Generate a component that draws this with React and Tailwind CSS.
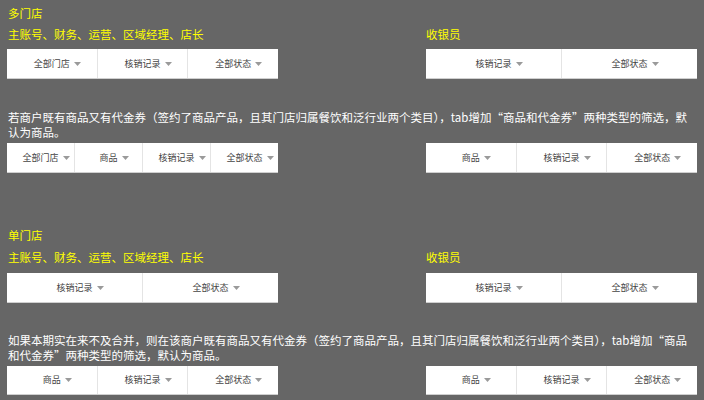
import React from "react";

const Arrow = () => (
  <svg width="7" height="4" viewBox="0 0 7 4" className="ml-[4px] shrink-0">
    <path d="M0 0 L7 0 L3.5 4 Z" fill="#9a9a9a" />
  </svg>
);

const Cell = ({ label, first }) => (
  <div
    className={
      "flex-1 flex items-center justify-center " +
      (first ? "" : "border-l border-[#e4e4e4]")
    }
  >
    <span className="w-[11px] shrink-0" />
    <span className="text-[9px] leading-[12px] text-[#444] whitespace-nowrap">{label}</span>
    <Arrow />
  </div>
);

const Bar = ({ items, h = "h-[30px]" }) => (
  <div className={"w-[271px] bg-white flex border-b border-[#cfcfcf] " + h}>
    {items.map((it, i) => (
      <Cell key={i} label={it} first={i === 0} />
    ))}
  </div>
);

const Y = "text-[#ffff00]";

export default function App() {
  return (
    <div
      className="w-[704px] h-[400px] bg-[#666666] overflow-hidden text-[11.5px]"
      style={{ fontFamily: '"Noto Sans CJK SC", "Noto Sans", sans-serif' }}
    >
      <div className="pl-[7px]">
        {/* Section 1 */}
        <div className={"pt-[3px] h-[23px] leading-[20px] pl-[1px] " + Y}>多门店</div>
        <div className="mt-[1px] flex gap-[148px] leading-[20px]">
          <div className={"w-[271px] pl-[1px] " + Y}>主账号、财务、运营、区域经理、店长</div>
          <div className={"w-[271px] " + Y}>收银员</div>
        </div>
        <div className="mt-[5px] flex gap-[148px]">
          <Bar items={["全部门店", "核销记录", "全部状态"]} />
          <Bar items={["核销记录", "全部状态"]} />
        </div>
        <div className="mt-[31px] pl-[1px] leading-[15px] text-white whitespace-nowrap">
          若商户既有商品又有代金券（签约了商品产品，且其门店归属餐饮和泛行业两个类目），tab增加“商品和代金券”两种类型的筛选，默
          <br />
          认为商品。
        </div>
        <div className="mt-[3px] flex gap-[148px]">
          <Bar items={["全部门店", "商品", "核销记录", "全部状态"]} h="h-[30px]" />
          <Bar items={["商品", "核销记录", "全部状态"]} h="h-[30px]" />
        </div>

        {/* Section 2 */}
        <div className={"mt-[52px] h-[20px] leading-[20px] pl-[1px] " + Y}>单门店</div>
        <div className="mt-[2px] flex gap-[148px] leading-[20px]">
          <div className={"w-[271px] pl-[1px] " + Y}>主账号、财务、运营、区域经理、店长</div>
          <div className={"w-[271px] " + Y}>收银员</div>
        </div>
        <div className="mt-[6px] flex gap-[148px]">
          <Bar items={["核销记录", "全部状态"]} />
          <Bar items={["核销记录", "全部状态"]} />
        </div>
        <div className="mt-[30px] pl-[1px] leading-[15px] text-white whitespace-nowrap">
          如果本期实在来不及合并，则在该商户既有商品又有代金券（签约了商品产品，且其门店归属餐饮和泛行业两个类目），tab增加“商品
          <br />
          和代金券”两种类型的筛选，默认为商品。
        </div>
        <div className="mt-[3px] flex gap-[148px]">
          <Bar items={["商品", "核销记录", "全部状态"]} h="h-[29px]" />
          <Bar items={["商品", "核销记录", "全部状态"]} h="h-[29px]" />
        </div>
      </div>
    </div>
  );
}
